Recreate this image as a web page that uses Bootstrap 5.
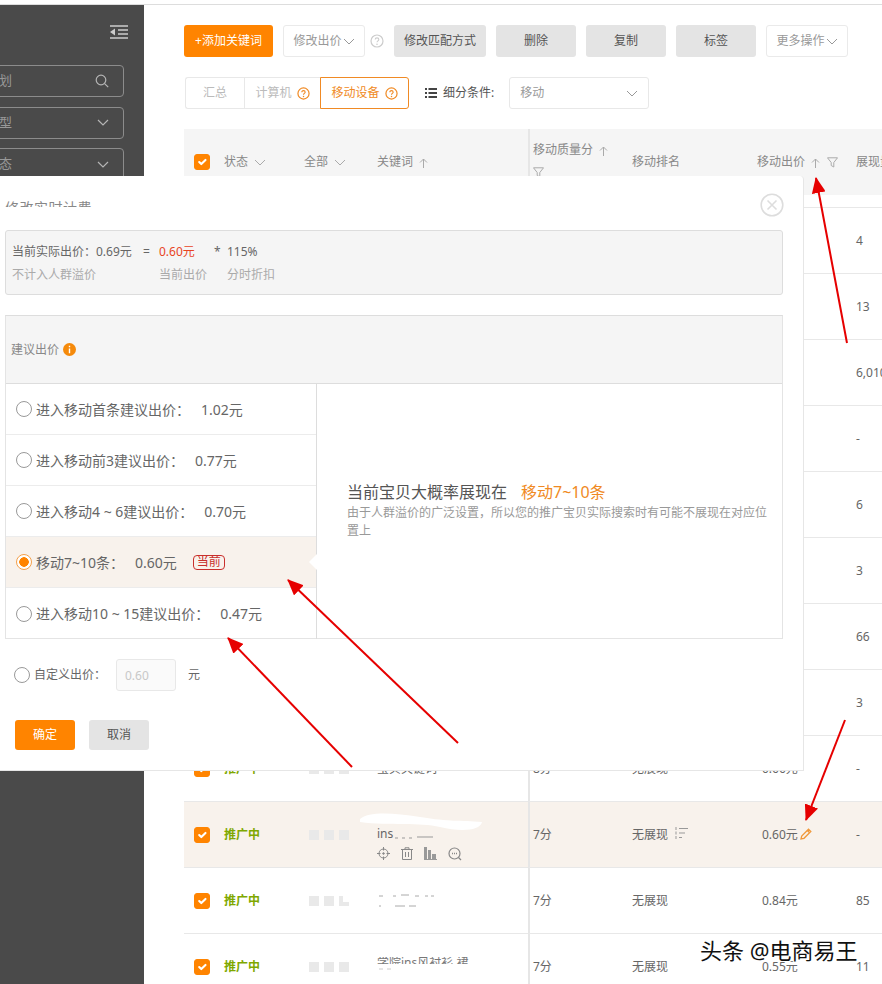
<!DOCTYPE html>
<html>
<head>
<title>修改出价</title>
<meta charset="utf-8">
<meta name="viewport" content="width=device-width, initial-scale=1">
<link href="https://cdn.jsdelivr.net/npm/bootstrap@5.3.3/dist/css/bootstrap.min.css" rel="stylesheet">
<script src="https://cdn.jsdelivr.net/npm/bootstrap@5.3.3/dist/js/bootstrap.bundle.min.js"></script>
<style>
html,body{height:984px;overflow:hidden;}
body{font-family:"Noto Sans","Noto Sans CJK SC",sans-serif;font-size:12px;color:#666;background:#fff;position:relative;}
.topline{height:5px;border-bottom:1px solid #ddd;}
.shell{height:979px;}
.sidebar{width:144px;flex:none;background:#4a4a4a;padding:20px 16px 0 0;overflow:hidden;}
.side-toggle{display:block;margin:0 0 26px auto;}
.side-field{height:32px;width:184px;margin:0 0 9.5px -60px;padding:0 14px 0 19px;border:1px solid #8c8c8c;border-radius:4px;color:#999;font-size:13px;}
.mainpane{flex:1;min-width:0;padding:20px 0 0 40px;overflow:hidden;}
.act{height:32px;padding:0;border-radius:3px;font-size:12px;border:0;display:flex;align-items:center;justify-content:center;}
.act-main{width:89px;background:#ff8400;color:#fff;}
.act-grey{width:80px;background:#e4e4e4;color:#555;}
.act-wide{width:92px;}
.act-line{width:82px;background:#fff;border:1px solid #eaeaea;color:#999;gap:1px;}
.act-help{width:29px;flex:none;margin:0 -10px;padding-left:5px;}
.toolrow{gap:10px;}
.segrow{margin-top:20px;height:32px;}
.seg{height:32px;border:1px solid #e8e8e8;color:#bbb;gap:5px;}
.seg-a{width:59px;margin-left:1px;border-radius:3px 0 0 3px;border-right:0;}
.seg-b{width:76px;border-right:0;}
.seg-c{width:89px;border:1px solid #f08a24;color:#f08a24;border-radius:0 3px 3px 0;}
.cond-label{margin:0 15px 0 6px;color:#555;}
.cond-select{width:140px;height:32px;border:1px solid #e8e8e8;border-radius:3px;padding:0 10px;color:#999;}
.datagrid{table-layout:fixed;width:760px;margin:20px 0 0;border-collapse:separate;border-spacing:0;}
.datagrid th{height:66px;background:#f5f5f5;font-weight:400;color:#888;padding:0;vertical-align:middle;white-space:nowrap;}
.datagrid td{height:66px;border-top:1px solid #e8e8e8;padding:0;vertical-align:middle;color:#666;background:transparent;white-space:nowrap;}
.datagrid .gaprow td{height:12px;border:0;}
.datagrid tr.hot td{background:#f8f2ec;}
.datagrid .frozen{border-left:2px solid #e6e6e6;padding-left:3px;}
.datagrid .cellprice{padding-left:5px;}
.datagrid .headwrap{white-space:normal;line-height:22px;padding-bottom:2px;}
.head-ico{margin-left:3px;}
.tick{width:16px;height:16px;margin:0 0 0 10px;background-color:#ff8400;border-color:#ff8400;border-radius:3px;float:none;display:block;}
.tick:checked{background-color:#ff8400;border-color:#ff8400;}
.datagrid td.state-on{color:#7fa800;font-weight:700;}
.sq{display:inline-block;width:10px;height:10px;background:#e9e9e9;margin-right:5px;vertical-align:middle;}
.sq-step{background:linear-gradient(to right,#e9e9e9 45%,transparent 45%),linear-gradient(to top,#e9e9e9 45%,transparent 45%);}
.kw-wrap{position:relative;display:block;margin-top:16px;line-height:18px;height:18px;}
.kw-tools{gap:11px;margin-top:4px;}
.smudge{display:block;}
.blob{position:absolute;left:-17px;top:-13px;}
.kw-dash{vertical-align:-1px;}
.kw-cut{display:block;height:7px;overflow:hidden;line-height:12px;color:#777;margin-top:-6px;}
.bid-edit{margin-left:2px;vertical-align:-1px;}
.rank-ico{margin-left:7px;vertical-align:-1px;}
/* dialog over the page */
.bid-dialog{position:absolute;left:0;top:176px;width:804px;height:595px;background:#fff;border-right:1px solid #e6e6e6;border-bottom:1px solid #e6e6e6;border-top-right-radius:4px;}
.dlg-title{position:absolute;left:5px;top:25px;height:6px;overflow:hidden;font-size:14px;color:#888;line-height:14px;letter-spacing:.5px;}
.dlg-close{position:absolute;left:760px;top:17px;}
.calc-box{margin:54px 20px 0 5px;height:65px;background:#f5f5f5;border:1px solid #ddd;border-radius:3px;padding:9px 0 0 6px;}
.calc-line{height:23px;line-height:23px;position:relative;}
.calc-a{width:131px;flex:none;}
.calc-eq{width:16px;flex:none;}
.calc-b{width:55px;flex:none;}
.calc-star{width:13px;flex:none;}
.calc-muted{color:#aaa;}
.calc-red{color:#e8441f;}
.suggest{margin:20px 20px 0 5px;height:324px;border:1px solid #e4e4e4;border-top-color:#ddd;}
.suggest-head{height:68px;background:#f5f5f5;border-bottom:1px solid #ddd;padding-left:5px;gap:4px;color:#888;}
.suggest-body{height:255px;}
.level-list{width:311px;flex:none;border-right:1px solid #ddd;}
.level-list .list-group-item{height:51px;padding:0 0 0 10px;border-color:#ececec;font-size:14px;color:#666;gap:4px;background:transparent;}
.level-list .list-group-item.hot{background:#f8f2ec;position:relative;}
.level-list .list-group-item.hot::after{content:"";position:absolute;right:-1px;top:17px;border:8px solid transparent;border-right-color:#fff;border-left:0;}
.bid-val{margin-left:7px;}
.now-tag{margin-left:12px;border:1px solid #c9302c;border-radius:4px;color:#c9302c;font-size:12px;line-height:12px;padding:0 3px;height:15px;}
.opt{width:16px;height:16px;margin:0;flex:none;background:#fff;border:1px solid #999;}
.opt:checked{background:radial-gradient(circle,#ff8400 0,#ff8400 4.5px,#fff 5px);border-color:#f4a04a;}
.level-note{padding:0 14px 0 30px;}
.note-h{font-size:16px;color:#555;line-height:20px;height:20px;margin-top:98px;}
.note-o{color:#f08a24;margin-left:14px;}
.note-s{color:#999;line-height:18px;margin-top:2px;}
.own-row{margin:20px 0 0 14px;height:32px;}
.own-label{margin:0 9px 0 4px;width:73px;flex:none;}
.own-input{width:60px;height:32px;background:#fafafa;border:1px solid #e8e8e8;border-radius:3px;color:#c8c8c8;padding:0 8px;font-size:12px;}
.own-unit{margin-left:12px;}
.dlg-foot{margin:29px 0 0 15px;gap:14px;}
.dlg-btn{width:60px;height:30px;}
.arrow-layer{position:absolute;left:0;top:0;pointer-events:none;}
.stamp{position:absolute;left:700px;top:935px;font-size:22px;line-height:30px;color:#111;text-shadow:-1px -1px 0 #fff,1px -1px 0 #fff,-1px 1px 0 #fff,1px 1px 0 #fff;white-space:nowrap;}
</style>
</head>
<body>
<div class="topline"></div>
<div class="shell d-flex">
  <div class="sidebar">
    <svg class="side-toggle" width="18" height="14" viewBox="0 0 18 14"><g stroke="#ccc" stroke-width="1.6" fill="none"><path d="M0 1h18M8 5h10M8 9h10M0 13h18"/></g><path d="M0 7l5-3.5v7z" fill="#ccc"/></svg>
    <div class="side-field d-flex align-items-center justify-content-between"><span>全部计划</span><svg width="14" height="14" viewBox="0 0 14 14" fill="none" stroke="#b5b5b5" stroke-width="1.2"><circle cx="6" cy="6" r="4.8"/><path d="M9.6 9.6l3.6 3.6"/></svg></div>
    <div class="side-field d-flex align-items-center justify-content-between"><span>全部类型</span><svg width="12" height="7" viewBox="0 0 12 7" fill="none" stroke="#b5b5b5" stroke-width="1.2"><path d="M1 1l5 5 5-5"/></svg></div>
    <div class="side-field d-flex align-items-center justify-content-between"><span>全部状态</span><svg width="12" height="7" viewBox="0 0 12 7" fill="none" stroke="#b5b5b5" stroke-width="1.2"><path d="M1 1l5 5 5-5"/></svg></div>
  </div>
  <div class="mainpane">
    <div class="d-flex toolrow">
      <button type="button" class="btn act act-main">+添加关键词</button>
      <button type="button" class="btn act act-line">修改出价<svg width="12" height="7" viewBox="0 0 12 7" fill="none" stroke="#999"><path d="M1 1l5 5 5-5"/></svg></button>
      <div class="act-help d-flex align-items-center"><svg width="14" height="14" viewBox="0 0 14 14"><circle cx="7" cy="7" r="6" fill="none" stroke="#ccc" stroke-width="1.2"/><path d="M5.2 5.6c0-2.300 3.600-2.300 3.600 0 0 1.300-1.800 1.300-1.800 2.700" fill="none" stroke="#ccc" stroke-width="1.100"/><circle cx="7" cy="10.200" r=".8" fill="#ccc"/></svg></div>
      <button type="button" class="btn act act-grey act-wide">修改匹配方式</button>
      <button type="button" class="btn act act-grey">删除</button>
      <button type="button" class="btn act act-grey">复制</button>
      <button type="button" class="btn act act-grey">标签</button>
      <button type="button" class="btn act act-line">更多操作<svg width="12" height="7" viewBox="0 0 12 7" fill="none" stroke="#999"><path d="M1 1l5 5 5-5"/></svg></button>
    </div>
    <div class="d-flex align-items-center segrow">
      <div class="seg seg-a d-flex align-items-center justify-content-center">汇总</div>
      <div class="seg seg-b d-flex align-items-center justify-content-center">计算机<svg width="13" height="13" viewBox="0 0 14 14"><circle cx="7" cy="7" r="6" fill="none" stroke="#f08a24" stroke-width="1.300"/><path d="M5.200 5.600c0-2.300 3.600-2.300 3.600 0 0 1.300-1.800 1.300-1.800 2.700" fill="none" stroke="#f08a24" stroke-width="1.200"/><circle cx="7" cy="10.200" r=".8" fill="#f08a24"/></svg></div>
      <div class="seg seg-c d-flex align-items-center justify-content-center">移动设备<svg width="13" height="13" viewBox="0 0 14 14"><circle cx="7" cy="7" r="6" fill="none" stroke="#f08a24" stroke-width="1.300"/><path d="M5.200 5.600c0-2.300 3.600-2.300 3.600 0 0 1.300-1.800 1.300-1.800 2.700" fill="none" stroke="#f08a24" stroke-width="1.200"/><circle cx="7" cy="10.200" r=".8" fill="#f08a24"/></svg></div>
      <svg class="ms-3" width="12" height="10" viewBox="0 0 12 10" fill="#444"><path d="M0 0h2v2H0zM3.500 0H12v2H3.500zM0 4h2v2H0zM3.500 4H12v2H3.500zM0 8h2v2H0zM3.500 8H12v2H3.500z"/></svg>
      <span class="cond-label">细分条件:</span>
      <div class="cond-select d-flex align-items-center justify-content-between">移动<svg width="12" height="7" viewBox="0 0 12 7" fill="none" stroke="#999"><path d="M1 1l5 5 5-5"/></svg></div>
    </div>
    <table class="datagrid">
      <colgroup><col style="width:40px"><col style="width:80px"><col style="width:73px"><col style="width:151px"><col style="width:104px"><col style="width:125px"><col style="width:99px"><col style="width:88px"></colgroup>
      <thead><tr>
        <th><input class="form-check-input tick" type="checkbox" checked></th>
        <th>状态 <svg class="head-ico" width="12" height="7" viewBox="0 0 12 7" fill="none" stroke="#aaa"><path d="M1 1l5 5 5-5"/></svg></th>
        <th>全部 <svg class="head-ico" width="12" height="7" viewBox="0 0 12 7" fill="none" stroke="#aaa"><path d="M1 1l5 5 5-5"/></svg></th>
        <th>关键词 <svg class="head-ico" width="9" height="10" viewBox="0 0 9 10" fill="none" stroke="#aaa"><path d="M4.500 10V1M1 4.500l3.500-3.500 3.500 3.500"/></svg></th>
        <th class="frozen headwrap">移动质量分 <svg class="head-ico" width="9" height="10" viewBox="0 0 9 10" fill="none" stroke="#aaa"><path d="M4.500 10V1M1 4.500l3.500-3.500 3.500 3.500"/></svg><br><svg width="11" height="11" viewBox="0 0 11 11" fill="none" stroke="#aaa"><path d="M.5.800h10L6.800 5.500V10L4.200 8.500v-3z"/></svg></th>
        <th>移动排名</th>
        <th>移动出价 <svg class="head-ico" width="9" height="10" viewBox="0 0 9 10" fill="none" stroke="#aaa"><path d="M4.500 10V1M1 4.500l3.500-3.500 3.500 3.500"/></svg> <svg class="ms-1" width="11" height="11" viewBox="0 0 11 11" fill="none" stroke="#aaa"><path d="M.5.800h10L6.800 5.500V10L4.200 8.500v-3z"/></svg></th>
        <th>展现量</th>
      </tr></thead>
      <tbody id="rows"><tr class="gaprow"><td colspan="4"></td><td class="frozen"></td><td colspan="3"></td></tr></tbody>
    </table>
  </div>
</div>

<div class="bid-dialog">
  <div class="dlg-title">修改实时计费</div>
  <svg class="dlg-close" width="24" height="24" viewBox="0 0 24 24" fill="none" stroke="#ddd" stroke-width="1.600"><circle cx="12" cy="12" r="10.800"/><path d="M7.500 7.500l9 9M16.500 7.500l-9 9"/></svg>
  <div class="calc-box">
    <div class="calc-line d-flex"><span class="calc-a">当前实际出价：0.69元</span><span class="calc-eq">=</span><span class="calc-b calc-red">0.60元</span><span class="calc-star">*</span><span>115%</span></div>
    <div class="calc-line d-flex calc-muted"><span class="calc-a">不计入人群溢价</span><span class="calc-eq"></span><span class="calc-b" style="width:68px">当前出价</span><span>分时折扣</span></div>
  </div>
  <div class="suggest">
    <div class="suggest-head d-flex align-items-center">建议出价<svg width="13" height="13" viewBox="0 0 13 13"><circle cx="6.500" cy="6.500" r="6.500" fill="#f58a0b"/><path d="M5.800 5.500h1.400v4.700H5.800zM5.800 2.800h1.400v1.400H5.800z" fill="#fff"/></svg></div>
    <div class="suggest-body d-flex">
      <div class="level-list list-group list-group-flush rounded-0">
        <label class="list-group-item d-flex align-items-center"><input class="form-check-input opt" type="radio" name="lv">进入移动首条建议出价：<span class="bid-val">1.02元</span></label>
        <label class="list-group-item d-flex align-items-center"><input class="form-check-input opt" type="radio" name="lv">进入移动前3建议出价：<span class="bid-val">0.77元</span></label>
        <label class="list-group-item d-flex align-items-center"><input class="form-check-input opt" type="radio" name="lv">进入移动4 ~ 6建议出价：<span class="bid-val">0.70元</span></label>
        <label class="list-group-item hot d-flex align-items-center"><input class="form-check-input opt" type="radio" name="lv" checked>移动7~10条：<span class="bid-val">0.60元</span><span class="now-tag d-flex align-items-center">当前</span></label>
        <label class="list-group-item d-flex align-items-center"><input class="form-check-input opt" type="radio" name="lv">进入移动10 ~ 15建议出价：<span class="bid-val">0.47元</span></label>
      </div>
      <div class="level-note flex-grow-1">
        <div class="note-h">当前宝贝大概率展现在<span class="note-o">移动7~10条</span></div>
        <div class="note-s">由于人群溢价的广泛设置，所以您的推广宝贝实际搜索时有可能不展现在对应位置上</div>
      </div>
    </div>
  </div>
  <div class="own-row d-flex align-items-center">
    <input class="form-check-input opt" type="radio" name="lv">
    <span class="own-label">自定义出价：</span>
    <input class="own-input" type="text" value="0.60" disabled>
    <span class="own-unit">元</span>
  </div>
  <div class="dlg-foot d-flex">
    <button type="button" class="btn act act-main dlg-btn">确定</button>
    <button type="button" class="btn act act-grey dlg-btn">取消</button>
  </div>
</div>

<svg class="arrow-layer" width="882" height="984" viewBox="0 0 882 984">
  <defs><marker id="redhead" markerWidth="16" markerHeight="14" refX="15" refY="7" orient="auto" markerUnits="userSpaceOnUse"><path d="M0 0L16 7L0 14z" fill="#e60000"/></marker></defs>
  <g stroke="#e60000" stroke-width="2" fill="none">
    <path d="M847 343L816 178" marker-end="url(#redhead)"/>
    <path d="M845 720L806 820" marker-end="url(#redhead)"/>
    <path d="M458 743L288 580" marker-end="url(#redhead)"/>
    <path d="M352 767L228 638" marker-end="url(#redhead)"/>
  </g>
</svg>
<div class="stamp">头条 @电商易王</div>

<script>
var data=[["8分","无展现","0.66元","4"],["8分","无展现","0.70元","13"],["7分","无展现","0.62元","6,010"],["7分","无展现","0.58元","-"],["7分","无展现","0.60元","6"],["7分","无展现","0.71元","3"],["7分","无展现","0.64元","66"],["8分","无展现","0.63元","3"],["8分","无展现","0.66元","-"],["7分","无展现","0.60元","-"],["7分","无展现","0.84元","85"],["7分","无展现","0.55元","11"]];
var tools='<div class="kw-tools d-flex align-items-center">'
 +'<svg width="13" height="13" viewBox="0 0 13 13" fill="none" stroke="#888"><circle cx="6.500" cy="6.500" r="4.500"/><path d="M6.500 0v3.500M6.500 9.500V13M0 6.500h3.500M9.500 6.500H13"/><circle cx="6.500" cy="6.500" r=".8" fill="#888"/></svg>'
 +'<svg width="12" height="13" viewBox="0 0 12 13" fill="none" stroke="#888"><path d="M0 2.500h12M4 2.500V.8h4v1.700M1.500 2.500v10h9v-10M4.500 5v5M7.500 5v5"/></svg>'
 +'<svg width="13" height="13" viewBox="0 0 13 13" fill="#999"><path d="M0 0h3v12H0zM4 3h3v9H4zM8 7h4v5H8zM0 12h13v1H0z"/></svg>'
 +'<svg width="14" height="14" viewBox="0 0 14 14" fill="none" stroke="#888" stroke-width="1.200"><circle cx="6.500" cy="6.500" r="5.500"/><path d="M10.500 10.500l2.500 2.500"/><path d="M4 6.500h1M6 6.500h1M8 6.500h1" stroke-width="1.400"/></svg></div>';
var smudge='<svg class="smudge" width="70" height="20" viewBox="0 0 70 20" stroke="#aaa" fill="none"><path d="M2 5h4M16 5h3M24 4h8M38 5h4M48 5h3M54 5h3M2 15h2M18 15h10M32 15h7"/></svg>';
var html=document.getElementById("rows");
var out="";
for(var i=0;i<data.length;i++){
  var d=data[i];
  var kw="宝贝关键词";
  if(i==9) kw='<span class="kw-wrap">ins<svg class="kw-dash" width="45" height="4" viewBox="0 0 45 4" stroke="#999" fill="none"><path d="M2 3h3M9 3h3M16 3h3M24 2h16"/></svg><svg class="blob" width="122" height="20" viewBox="0 0 122 20"><path d="M0 7C8 0 30 0 60 5s40 3 62 5c-2 9-22 10-42 5S30 14 0 10z" fill="#fff"/></svg></span>'+tools;
  if(i==10) kw=smudge;
  if(i==11) kw='<span class="kw-cut">学院ins风衬衫 裙</span><svg class="smudge mt-1" width="30" height="3" viewBox="0 0 30 3" stroke="#ccc"><path d="M2 1h4M10 1h4"/></svg>';
  var sq='<span class="sq"></span><span class="sq"></span><span class="sq'+(i==10?' sq-step':'')+'"></span>';
  var rank=d[1]+(i==9?'<svg class="rank-ico" width="13" height="13" viewBox="0 0 13 13" stroke="#999" fill="none"><path d="M4 1.500h9M4 6h6M4 10.500h3M1 0v3M1 4.500v3M1 9v3" /></svg>':'');
  var price=d[2]+(i==9?'<svg class="bid-edit" width="12" height="12" viewBox="0 0 12 12" fill="none" stroke="#f0983a" stroke-width="1.300"><path d="M1 11l.7-3L8.500 1.200l2.300 2.300L4 10.300zM7.300 2.500l2.300 2.300"/></svg>':'');
  out+='<tr'+(i==9?' class="hot"':'')+'><td><input class="form-check-input tick" type="checkbox" checked></td><td class="state-on">推广中</td><td style="padding-left:5px">'+sq+'</td><td>'+kw+'</td><td class="frozen">'+d[0]+'</td><td>'+rank+'</td><td class="cellprice">'+price+'</td><td>'+d[3]+'</td></tr>';
}
html.insertAdjacentHTML("beforeend",out);
</script>
</body>
</html>
